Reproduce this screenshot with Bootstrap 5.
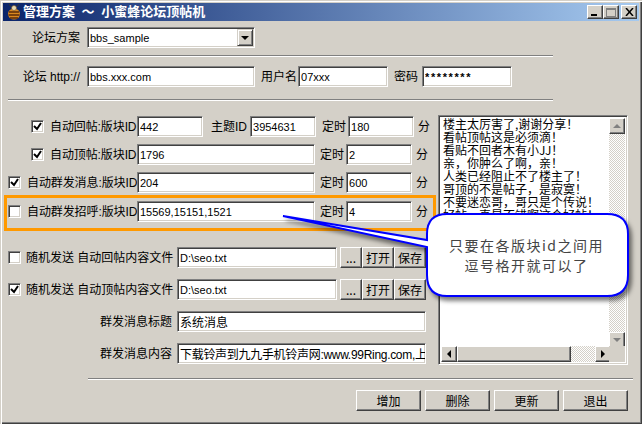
<!doctype html>
<html lang="zh"><head><meta charset="utf-8">
<link href="https://cdn.jsdelivr.net/npm/bootstrap@5.3.0/dist/css/bootstrap.min.css" rel="stylesheet">
<style>
html,body{margin:0;height:424px;overflow:hidden;background:#d4d0c8}
body{font:12px/14px "Liberation Sans","Noto Sans CJK SC",sans-serif;color:#000}
.win-frame{width:642px;height:424px;position:relative;padding:3px;box-shadow:inset 1px 1px 0 #d4d0c8,inset 2px 2px 0 #fff,inset -1px -1px 0 #404040,inset -2px -2px 0 #808080}
.title-strip{height:18px;background:linear-gradient(90deg,#0a246a,#a6caf0);color:#fff;font-weight:700;font-size:13px;line-height:18px;padding-left:4px;gap:2px;word-spacing:3px}
.title-strip .cap-btns{margin-left:auto;padding-right:2px}
.cap-btn{width:16px;height:14px;background:#d4d0c8;border:1px solid;border-color:#fff #404040 #404040 #fff;box-shadow:inset -1px -1px 0 #808080;display:flex;align-items:center;justify-content:center;padding:0}
.cap-btn+.cap-btn+.cap-btn{margin-left:2px}
.form-area{height:400px;padding:6px 0 0 1px}
.lab{white-space:nowrap;font-size:12px;flex:none}
.ra{text-align:right}
.fld{height:21px;border:1px solid;border-color:#808080 #fff #fff #808080;box-shadow:inset 1px 1px 0 #404040,inset -1px -1px 0 #d4d0c8;background:#fff;font:11px/17px "Liberation Sans","Noto Sans CJK SC",sans-serif;padding:1px 0 1px 2px;border-radius:0;outline:0;color:#000;display:block;flex:none}
.cjk-val{font:12px/17px "Liberation Sans","Noto Sans CJK SC",sans-serif}
.tight-val{letter-spacing:-.3px}
.pw-val{letter-spacing:1.6px;font-weight:700}
.w168{width:168px}.w90{width:90px}.w66{width:66px}.w178{width:178px}.w160{width:160px}.w249{width:249px}
.combo{position:relative;width:168px;margin-left:7px}
.combo-arrow{position:absolute;top:2px;right:2px;width:16px;height:17px;background:#d4d0c8;border:1px solid;border-color:#d4d0c8 #404040 #404040 #d4d0c8;box-shadow:inset 1px 1px 0 #fff,inset -1px -1px 0 #808080;display:flex;align-items:center;justify-content:center}
.tri-d{width:0;height:0;border:4px solid transparent;border-top-color:#000;border-bottom:0}
.sep{height:2px;background:#808080;border-bottom:1px solid #fff;flex:none}
.sep-top{width:545px;margin-left:4px}
.chk{width:13px;height:13px;flex:none;margin:0;appearance:none;background:#fff;border:1px solid;border-color:#808080 #fff #fff #808080;box-shadow:inset 1px 1px 0 #404040,inset -1px -1px 0 #d4d0c8;background-position:center;background-repeat:no-repeat}
.chk:checked{background-image:url("data:image/svg+xml,%3Csvg xmlns='http://www.w3.org/2000/svg' width='9' height='9'%3E%3Cpath d='M1 4l3 3 4-6' fill='none' stroke='%23000' stroke-width='2'/%3E%3C/svg%3E")}
.chk-in{margin-left:27px}.chk-out{margin-left:4px}
.lab-87{width:87px;margin-left:6px;letter-spacing:-.1px}.lab-110{width:110px;margin-left:6px;letter-spacing:-.1px}.lab-151{width:151px;margin-left:5px}.lab-168{width:168px}.lab-76{width:76px}
.upper-rows{margin-top:15px;width:434px}
.line{height:21px;align-items:center;flex:none}
.gap7{margin-top:7px}.gap8{margin-top:8px}.gap11{margin-top:11px}.gap25{margin-top:25px}
.tm-lab{margin:0 2px 0 5px}.tm-lab-a{margin:0 2px 0 6px}.min-lab{margin-left:4px}
.orange-box{position:absolute;left:4px;top:195px;width:432px;height:36px;border:3px solid #f90;pointer-events:none}
.win-btn{background:#d4d0c8;border:1px solid;border-color:#fff #404040 #404040 #fff;box-shadow:inset -1px -1px 0 #808080;font:12px/14px "Noto Sans CJK SC",sans-serif;padding:0;color:#000;border-radius:0;height:21px}
.b-dots{width:22px}.b-open{width:32px}
.b-act{width:65px;height:21px}
.file-btns{margin-left:3px}
.memo{position:absolute;left:438px;top:115px;width:190px;height:250px;border:1px solid;border-color:#808080 #fff #fff #808080;box-shadow:inset 1px 1px 0 #404040,inset -1px -1px 0 #d4d0c8;background:#fff;overflow:hidden}
.memo-text{position:absolute;left:4px;top:1px;width:170px;font:12px/13px "Noto Sans CJK SC",sans-serif;white-space:nowrap}
.sb-v{position:absolute;right:2px;top:2px;width:16px;height:230px;background:repeating-conic-gradient(#d4d0c8 0 25%,#fff 0 50%) 0 0/2px 2px}
.sb-h{position:absolute;left:2px;bottom:2px;width:170px;height:16px;background:repeating-conic-gradient(#d4d0c8 0 25%,#fff 0 50%) 0 0/2px 2px}
.sb-corner{position:absolute;right:2px;bottom:2px;width:16px;height:16px;background:#d4d0c8}
.sb-btn{position:absolute;width:16px;height:16px;background:#d4d0c8;border:1px solid;border-color:#fff #404040 #404040 #fff;box-shadow:inset -1px -1px 0 #808080;display:flex;align-items:center;justify-content:center}
.sb-thumb{position:absolute;left:16px;top:0;width:114px;height:16px;background:#d4d0c8;border:1px solid;border-color:#fff #404040 #404040 #fff;box-shadow:inset -1px -1px 0 #808080}
.tri-u{width:0;height:0;border:4px solid transparent;border-bottom-color:#808080;border-top:0}
.tri-dn{width:0;height:0;border:4px solid transparent;border-top-color:#808080;border-bottom:0}
.tri-l{width:0;height:0;border:4px solid transparent;border-right-color:#000;border-left:0}
.tri-r{width:0;height:0;border:4px solid transparent;border-left-color:#000;border-right:0}
.callout-art{position:absolute;left:0;top:0;pointer-events:none;filter:drop-shadow(3px 4px 2px rgba(0,0,0,.5))}
.callout-note{position:absolute;left:426px;top:235px;width:201px;text-align:center;font:14px/20px "Noto Sans CJK SC",sans-serif;color:#444;letter-spacing:1.5px}
.foot-sep{width:545px;margin:14px 0 0 84px}
.foot-btns{margin:10px 0 0 352px;gap:4px}
</style></head><body>
<div class="win-frame">
 <div class="title-strip d-flex align-items-center">
  <svg width="14" height="16" viewBox="0 0 14 16"><path d="M4 3L2 0M10 3l2-3" stroke="#333" fill="none"/><ellipse cx="7" cy="10" rx="6" ry="5.5" fill="#d9881f"/><path d="M2 8h10M1.500 11h11M3 14h8" stroke="#5a2a08" stroke-width="1.400"/><circle cx="7" cy="4" r="2.500" fill="#e8d9b0" stroke="#6b4a20" stroke-width=".6"/></svg>
  <span>管理方案 ～ 小蜜蜂论坛顶帖机</span>
  <div class="cap-btns d-flex">
   <button class="cap-btn" aria-label="最小化"><svg width="8" height="8"><rect x="0" y="6" width="6" height="2"/></svg></button>
   <button class="cap-btn" aria-label="最大化"><svg width="10" height="9"><rect x=".5" y=".5" width="9" height="8" fill="none" stroke="#808080"/><rect x="1" y="1" width="8" height="1" fill="#808080"/></svg></button>
   <button class="cap-btn" aria-label="关闭"><svg width="9" height="8"><path d="M1 0l7 8M8 0l-7 8" stroke="#000" stroke-width="1.500"/></svg></button>
  </div>
 </div>
 <div class="form-area">
  <div class="d-flex line"><span class="lab ra lab-76">论坛方案</span>
   <div class="combo"><input class="fld w168" value="bbs_sample"><span class="combo-arrow"><span class="tri-d"></span></span></div></div>
  <div class="sep sep-top" style="margin-top:7px"></div>
  <div class="d-flex line" style="margin-top:9px"><span class="lab ra lab-76" style="margin-right:7px">论坛 http://</span>
   <input class="fld w168" value="bbs.xxx.com"><span class="lab" style="margin:0 1px 0 6px">用户名</span><input class="fld w90" value="07xxx"><span class="lab" style="margin:0 4px 0 6px">密码</span><input class="fld w90 pw-val" value="********"></div>
  <div class="sep sep-top" style="margin-top:12px"></div>
  <div class="upper-rows">
   <div class="d-flex line"><input type="checkbox" class="chk chk-in" checked><span class="lab lab-87">自动回帖:版块ID</span><input class="fld w66" value="442"><span class="lab" style="margin:0 3px 0 8px">主题ID</span><input class="fld w66" value="3954631"><span class="lab tm-lab-a">定时</span><input class="fld w66" value="180"><span class="lab min-lab">分</span></div>
   <div class="d-flex line gap7"><input type="checkbox" class="chk chk-in" checked><span class="lab lab-87">自动顶帖:版块ID</span><input class="fld w178" value="1796"><span class="lab tm-lab">定时</span><input class="fld w66" value="2"><span class="lab min-lab">分</span></div>
   <div class="d-flex line gap7"><input type="checkbox" class="chk chk-out" checked><span class="lab lab-110">自动群发消息:版块ID</span><input class="fld w178" value="204"><span class="lab tm-lab">定时</span><input class="fld w66" value="600"><span class="lab min-lab">分</span></div>
   <div class="d-flex line gap8"><input type="checkbox" class="chk chk-out"><span class="lab lab-110">自动群发招呼:版块ID</span><input class="fld w178" value="15569,15151,1521"><span class="lab tm-lab">定时</span><input class="fld w66" value="4"><span class="lab min-lab">分</span></div>
  </div>
  <div class="d-flex line gap25"><input type="checkbox" class="chk chk-out"><span class="lab lab-151">随机发送 自动回帖内容文件</span><input class="fld w160" value="D:\seo.txt"><div class="d-flex file-btns"><button class="win-btn b-dots">...</button><button class="win-btn b-open">打开</button><button class="win-btn b-open">保存</button></div></div>
  <div class="d-flex line gap11"><input type="checkbox" class="chk chk-out" checked><span class="lab lab-151">随机发送 自动顶帖内容文件</span><input class="fld w160" value="D:\seo.txt"><div class="d-flex file-btns"><button class="win-btn b-dots">...</button><button class="win-btn b-open">打开</button><button class="win-btn b-open">保存</button></div></div>
  <div class="d-flex line gap11"><span class="lab ra lab-168" style="margin-right:5px">群发消息标题</span><input class="fld w249 cjk-val" value="系统消息"></div>
  <div class="d-flex line gap11"><span class="lab ra lab-168" style="margin-right:5px">群发消息内容</span><input class="fld w249 cjk-val tight-val" value="下载铃声到九九手机铃声网:www.99Ring.com,上"></div>
  <div class="sep foot-sep"></div>
  <div class="d-flex foot-btns"><button class="win-btn b-act">增加</button><button class="win-btn b-act">删除</button><button class="win-btn b-act">更新</button><button class="win-btn b-act">退出</button></div>
 </div>
 <div class="orange-box"></div>
 <div class="memo">
  <div class="memo-text">楼主太厉害了,谢谢分享！<br>看帖顶帖这是必须滴！<br>看贴不回者木有小JJ！<br>亲，你肿么了啊，亲！<br>人类已经阻止不了楼主了！<br>哥顶的不是帖子，是寂寞！<br>不要迷恋哥，哥只是个传说！<br>好帖，真是不错啊这个好帖！</div>
  <div class="sb-v"><span class="sb-btn" style="top:0;left:0"><span class="tri-u"></span></span><span class="sb-btn" style="bottom:0;left:0"><span class="tri-dn"></span></span></div>
  <div class="sb-h"><span class="sb-btn" style="left:0;top:0"><span class="tri-l"></span></span><span class="sb-thumb"></span><span class="sb-btn" style="right:0;top:0"><span class="tri-r"></span></span></div>
  <div class="sb-corner"></div>
 </div>
 <svg class="callout-art" width="642" height="424" viewBox="0 0 642 424">
  <path d="M283 216L427 240V234Q427 214 447 214H607Q628 214 628 234V275Q628 296 607 296H447Q427 296 427 275V247Z" fill="#fff" stroke="#00f" stroke-width="2"/>
 </svg>
 <div class="callout-note">只要在各版块id之间用<br>逗号格开就可以了</div>
</div>
</body></html>
